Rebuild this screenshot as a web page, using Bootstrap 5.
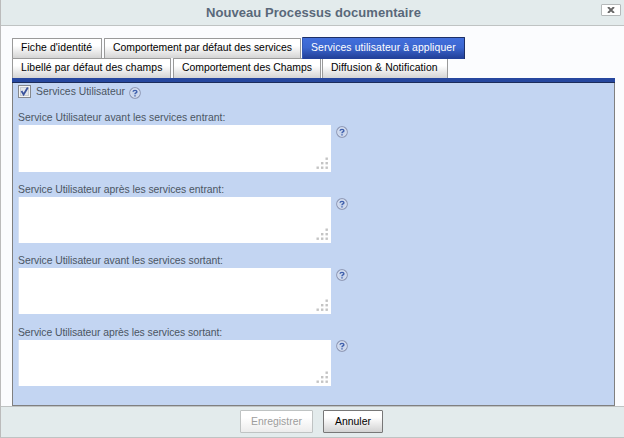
<!DOCTYPE html>
<html lang="fr">
<head>
<meta charset="utf-8">
<title>Nouveau Processus documentaire</title>
<link href="https://cdn.jsdelivr.net/npm/bootstrap@5.3.0/dist/css/bootstrap.min.css" rel="stylesheet">
<style>
body{font-family:"Liberation Sans",Arial,sans-serif;font-size:10.4px;line-height:12px;letter-spacing:0;color:#4b5563;background:#fbfcfe;overflow:hidden}
.dialog-box{height:438px;border-left:1px solid #bbb;border-bottom:1px solid #bfc3c3}
.dialog-head{height:26px;background:#e3ebec;border-bottom:1px solid #bfc3c3}
.dialog-title{font-size:13px;line-height:16px;font-weight:bold;color:#59687a;letter-spacing:.06px;padding-top:5px;margin:0 0 0 205px}
.close-btn{width:20px;height:12px;margin:4px 3px 0 0;border:1px solid #b5b9ba;border-radius:1px;background:#fff}
.dialog-main{height:380px;padding:11px 9px 0 11px}
.tab-line{height:21px}
.tab-line+.tab-line{height:20px}
.tab-btn{height:20px;margin-top:1px;border:1px solid #9a9a9a;border-bottom:0;background:linear-gradient(#fff 35%,#d4d4d4);color:#000;padding:0 0 1px 8px;border-radius:1px 1px 0 0;white-space:nowrap;text-align:left;line-height:12px;letter-spacing:inherit}
.tab-line+.tab-line .tab-btn{margin-top:0}
.tab-btn.current{position:relative;height:22px;margin-top:0;color:#fff;background:linear-gradient(#426fdc 0,#3c67d0 45%,#23419a 95%);border:1px solid #1d2f66;border-left-color:#3459b5;border-bottom:0;padding-bottom:2px}
.spread{letter-spacing:.1px!important}
.panel-top{height:5px;background:#26479f;border-bottom:1px solid #1c2c5a}
.panel-area{height:323px;background:#c3d5f2;border:1px solid #808080;border-top:0;padding-left:5px}
.check-line{height:28px;padding-top:2px}
.field-block{height:72px}
.field-block.short{height:71px}
.field-block .field-name{height:14px;padding-top:1px;display:block}
.after-in,.before-out{letter-spacing:-.04px}
.after-out{letter-spacing:-.07px}
.text-zone{width:313px;height:47px;background:#fff;border-left:1px solid #d7e1f2}
.field-block+.field-block .text-zone{height:46px}
.dialog-foot{height:31px;background:#e3ebec;border-top:1px solid #bfc3c3;padding:3px 0 0 239px;gap:10px}
.act{height:23px;line-height:12px;letter-spacing:inherit;color:#000;background:linear-gradient(#fff 30%,#d2d2d2);border:1px solid #777;border-radius:1px;padding:0;width:60px}
.act:disabled{width:73px;color:#9d9d9d;border-color:#bfc3c3;background:linear-gradient(#fff 30%,#ececec)}
</style>
<script src="https://cdn.jsdelivr.net/npm/bootstrap@5.3.0/dist/js/bootstrap.bundle.min.js"></script>
</head>
<body>
<svg width="0" height="0" class="position-absolute">
<defs>
<symbol id="help" viewBox="0 0 12 12"><circle cx="6" cy="6" r="5.3" fill="#c9d5ec" stroke="#929cb8" stroke-width="1.2"/><circle cx="6" cy="6" r="4.2" fill="none" stroke="#dfe6f4" stroke-width=".7"/><path d="M4.1 4.7C4.1 2.9 7.9 2.9 7.9 4.7C7.9 6 6 5.9 6 7.2M6 8.2V9.4" fill="none" stroke="#3e5fac" stroke-width="1.4"/></symbol>
<symbol id="grip" viewBox="0 0 13 13"><g fill="#c4c4c4"><rect x="9.5" y=".5" width="2.4" height="2.4"/><rect x="5" y="5" width="2.4" height="2.4"/><rect x="9.5" y="5" width="2.4" height="2.4"/><rect x=".5" y="9.5" width="2.4" height="2.4"/><rect x="5" y="9.5" width="2.4" height="2.4"/><rect x="9.5" y="9.5" width="2.4" height="2.4"/></g></symbol>
</defs>
</svg>
<div class="dialog-box d-flex flex-column">
  <header class="dialog-head d-flex justify-content-between align-items-start">
    <h1 class="dialog-title">Nouveau Processus documentaire</h1>
    <button class="close-btn p-0 d-flex align-items-center justify-content-center" aria-label="Fermer"><svg width="8" height="6" viewBox="0 0 8 6"><path d="M1 0L7 6M7 0L1 6" stroke="#666" stroke-width="1.9"/></svg></button>
  </header>
  <main class="dialog-main">
    <div class="tab-line d-flex align-items-start">
      <button class="tab-btn spread" style="width:90px">Fiche d'identité</button>
      <button class="tab-btn" style="width:197px;margin-left:2px">Comportement par défaut des services</button>
      <button class="tab-btn current spread" style="width:163px;margin-left:1px">Services utilisateur à appliquer</button>
    </div>
    <div class="tab-line d-flex align-items-start">
      <button class="tab-btn spread" style="width:159px">Libellé par défaut des champs</button>
      <button class="tab-btn" style="width:148px;margin-left:2px">Comportement des Champs</button>
      <button class="tab-btn spread" style="width:126px;margin-left:1px">Diffusion &amp; Notification</button>
    </div>
    <div class="panel-top"></div>
    <section class="panel-area">
      <div class="check-line d-flex align-items-start">
        <svg width="13" height="13" viewBox="0 0 13 13"><rect x=".5" y=".5" width="12" height="12" fill="#f4f4f4" stroke="#85888d"/><rect x="2.5" y="2.5" width="8" height="8" fill="#e3e6ea" stroke="#c8ccd2"/><path d="M3.5 6L5.6 9.5L9.8 2.5" fill="none" stroke="#3b539c" stroke-width="1.8"/></svg>
        <span style="margin:1px 0 0 5px;width:90px">Services Utilisateur</span>
        <svg width="12" height="12" style="margin:2px 0 0 3px"><use href="#help"/></svg>
      </div>
      <div class="field-block"><span class="field-name">Service Utilisateur avant les services entrant:</span><div class="d-flex align-items-start"><div class="text-zone d-flex justify-content-end align-items-end"><svg width="13" height="13" style="margin:0 2px 2px 0"><use href="#grip"/></svg></div><svg width="12" height="12" style="margin:1px 0 0 5px"><use href="#help"/></svg></div></div>
      <div class="field-block short"><span class="field-name after-in">Service Utilisateur après les services entrant:</span><div class="d-flex align-items-start"><div class="text-zone d-flex justify-content-end align-items-end"><svg width="13" height="13" style="margin:0 2px 2px 0"><use href="#grip"/></svg></div><svg width="12" height="12" style="margin:1px 0 0 5px"><use href="#help"/></svg></div></div>
      <div class="field-block"><span class="field-name before-out">Service Utilisateur avant les services sortant:</span><div class="d-flex align-items-start"><div class="text-zone d-flex justify-content-end align-items-end"><svg width="13" height="13" style="margin:0 2px 2px 0"><use href="#grip"/></svg></div><svg width="12" height="12" style="margin:1px 0 0 5px"><use href="#help"/></svg></div></div>
      <div class="field-block"><span class="field-name after-out">Service Utilisateur après les services sortant:</span><div class="d-flex align-items-start"><div class="text-zone d-flex justify-content-end align-items-end"><svg width="13" height="13" style="margin:0 2px 2px 0"><use href="#grip"/></svg></div><svg width="12" height="12" style="margin:0 0 0 5px"><use href="#help"/></svg></div></div>
    </section>
  </main>
  <footer class="dialog-foot d-flex align-items-start">
    <button class="act" disabled>Enregistrer</button>
    <button class="act">Annuler</button>
  </footer>
</div>
</body>
</html>
